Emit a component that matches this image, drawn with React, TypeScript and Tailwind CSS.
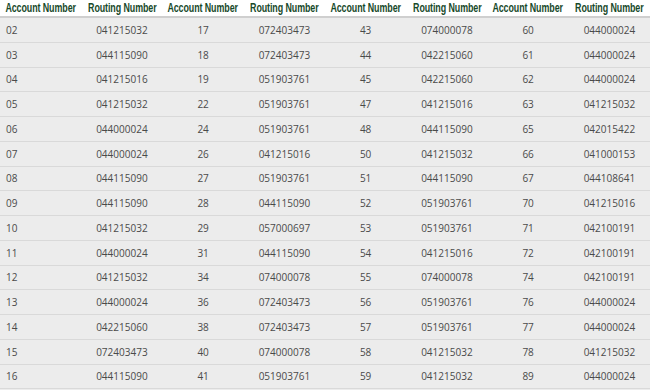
import React from "react";

const rows: string[][] = [
  ["02", "041215032", "17", "072403473", "43", "074000078", "60", "044000024"],
  ["03", "044115090", "18", "072403473", "44", "042215060", "61", "044000024"],
  ["04", "041215016", "19", "051903761", "45", "042215060", "62", "044000024"],
  ["05", "041215032", "22", "051903761", "47", "041215016", "63", "041215032"],
  ["06", "044000024", "24", "051903761", "48", "044115090", "65", "042015422"],
  ["07", "044000024", "26", "041215016", "50", "041215032", "66", "041000153"],
  ["08", "044115090", "27", "051903761", "51", "044115090", "67", "044108641"],
  ["09", "044115090", "28", "044115090", "52", "051903761", "70", "041215016"],
  ["10", "041215032", "29", "057000697", "53", "051903761", "71", "042100191"],
  ["11", "044000024", "31", "044115090", "54", "041215016", "72", "042100191"],
  ["12", "041215032", "34", "074000078", "55", "074000078", "74", "042100191"],
  ["13", "044000024", "36", "072403473", "56", "051903761", "76", "044000024"],
  ["14", "042215060", "38", "072403473", "57", "051903761", "77", "044000024"],
  ["15", "072403473", "40", "074000078", "58", "041215032", "78", "041215032"],
  ["16", "044115090", "41", "051903761", "59", "041215032", "89", "044000024"],
];

const headers = [
  "Account Number",
  "Routing Number",
  "Account Number",
  "Routing Number",
  "Account Number",
  "Routing Number",
  "Account Number",
  "Routing Number",
];

export default function App() {
  return (
    <div className="w-[650px] h-[390px] overflow-hidden bg-[#ececec]">
      <div className="grid grid-cols-8 h-[18px] bg-white border-b-2 border-[#cfcfcf]">
        {headers.map((h, i) => (
          <div key={i} className="flex items-center justify-center overflow-visible">
            <span
              className="inline-block scale-x-[0.74] text-[12px] font-bold tracking-[-0.1px] text-[#17492a] whitespace-nowrap leading-none"
              style={{ fontFamily: '"Liberation Sans", Arial, sans-serif' }}
            >
              {h}
            </span>
          </div>
        ))}
      </div>
      {rows.map((r, ri) => (
        <div
          key={ri}
          className="grid grid-cols-8 h-[24.75px] border-b border-[#d9d9d9] bg-[#ececec]"
        >
          {r.map((c, ci) => (
            <div
              key={ci}
              className={
                "flex items-center text-[10px] text-[#4a4a4a] leading-none " +
                (ci === 0 ? "justify-start pl-[6px]" : "justify-center")
              }
              style={{ fontFamily: '"Open Sans", sans-serif' }}
            >
              {c}
            </div>
          ))}
        </div>
      ))}
    </div>
  );
}
